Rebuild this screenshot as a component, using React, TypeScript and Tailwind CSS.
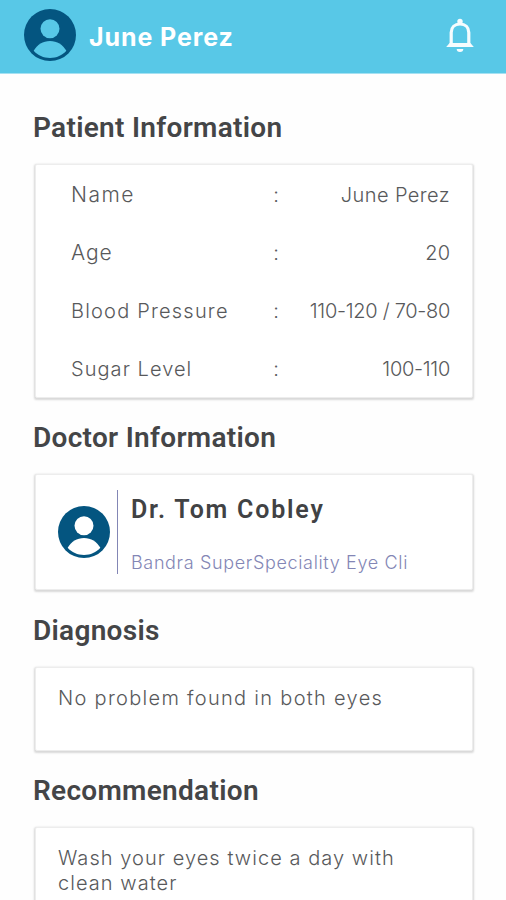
import type { ReactNode } from "react"
import clsx from "clsx"

const vitals = [
  { label: "Name", value: "June Perez", labelClass: "text-[21px] tracking-[1.5px]", valueClass: "tracking-[0.4px]" },
  { label: "Age", value: "20", labelClass: "text-[21px] tracking-[0.9px]", valueClass: "" },
  { label: "Blood Pressure", value: "110-120 / 70-80", labelClass: "tracking-[1.2px]", valueClass: "tracking-[-0.3px]" },
  { label: "Sugar Level", value: "100-110", labelClass: "tracking-[1.05px]", valueClass: "tracking-[-0.3px]" },
]

function Avatar({ cutout }: { cutout: string }) {
  return (
    <svg viewBox="0 0 52 52" className="size-[52px] shrink-0" aria-hidden="true">
      <circle cx="26" cy="26" r="26" fill="#045580" />
      <circle cx="26" cy="19.8" r="9.5" fill={cutout} />
      <path d="M9.7 41.8C13 35.6 19 31.9 26 31.9s13 3.7 16.3 9.900C38.3 46.4 32.500 49 26 49S13.700 46.400 9.700 41.800Z" fill={cutout} />
    </svg>
  )
}

function BellIcon() {
  return (
    <svg viewBox="0 0 28 36" className="mt-px h-9 w-7" aria-hidden="true">
      <path d="M5.200 27V14.500C5.200 9.500 8.700 6 14 6s8.800 3.500 8.800 8.500V27" fill="none" stroke="#f6fcfe" strokeWidth="3.200" />
      <circle cx="14" cy="3.400" r="2.700" fill="#f6fcfe" />
      <path d="M3.600 24.900h20.800l3.400 4.200H.2Z" fill="#f6fcfe" />
      <path d="M10.700 31h6.600a3.300 3 0 0 1-6.600 0Z" fill="#f6fcfe" />
    </svg>
  )
}

function Section({
  title,
  className,
  children,
}: {
  title: string
  className?: string
  children: ReactNode
}) {
  return (
    <section>
      <h2 className="pl-[33px] font-[Roboto] text-[28px] leading-[41px] font-semibold tracking-[0.3px] whitespace-nowrap text-[#444547]">
        {title}
      </h2>
      <div
        className={clsx(
          "mr-[33px] ml-[35px] mt-4 rounded-[2px] border border-[#ededed] bg-white shadow-[0_1px_2px_0.5px_rgba(0,0,0,0.15)]",
          className
        )}
      >
        {children}
      </div>
    </section>
  )
}

export default function App() {
  return (
    <div className="h-[900px] w-full overflow-hidden bg-[#fefefe] font-[Inter,sans-serif] text-[20px] font-light text-[#58595b]">
      <header className="flex h-[74px] items-center border-b border-[#a5e1f2] bg-[#58c8e7] pr-8 pb-[3px] pl-6">
        <Avatar cutout="#58c8e7" />
        <h1 className="mt-[5px] ml-[13px] text-[25px] font-bold tracking-[0.9px] whitespace-nowrap text-white">June Perez</h1>
        <div className="ml-auto">
          <BellIcon />
        </div>
      </header>

      <main className="flex flex-col pt-[33px]">
        <Section title="Patient Information" className="h-[234px] pt-px">
          {vitals.map((row) => (
            <div key={row.label} className="grid h-[58px] grid-cols-[199px_12px_1fr] items-center pr-[22px] pl-[35px] whitespace-nowrap">
              <span className={row.labelClass}>{row.label}</span>
              <span className="text-center">:</span>
              <span className={clsx("text-right", row.valueClass)}>{row.value}</span>
            </div>
          ))}
        </Section>

        <div className="h-[19px]" />
        <Section title="Doctor Information" className="flex h-[116px] items-center pl-[22px]">
          <Avatar cutout="#fff" />
          <div className="ml-[7px] h-[84px] w-px bg-[#8386b5]" />
          <div className="ml-[13px] flex h-[84px] flex-col justify-between whitespace-nowrap">
            <h3 className="font-[Roboto] text-[25px] leading-10 font-semibold tracking-[1.8px] text-[#414244]">Dr. Tom Cobley</h3>
            <p className="text-[18px] leading-[22px] tracking-[0.65px] text-[#8386b5]">Bandra SuperSpeciality Eye Cli</p>
          </div>
        </Section>

        <div className="h-5" />
        <Section title="Diagnosis" className="h-[84px] px-[22px] pt-[18px]">
          <p className="leading-[25px] tracking-[1.3px]">No problem found in both eyes</p>
        </Section>

        <div className="h-[19px]" />
        <Section title="Recommendation" className="h-[110px] px-[22px] pt-[18px]">
          <p className="leading-[25px] tracking-[1.05px]">
            Wash your eyes twice a day with
            <br />
            clean water
          </p>
        </Section>
      </main>
    </div>
  )
}
